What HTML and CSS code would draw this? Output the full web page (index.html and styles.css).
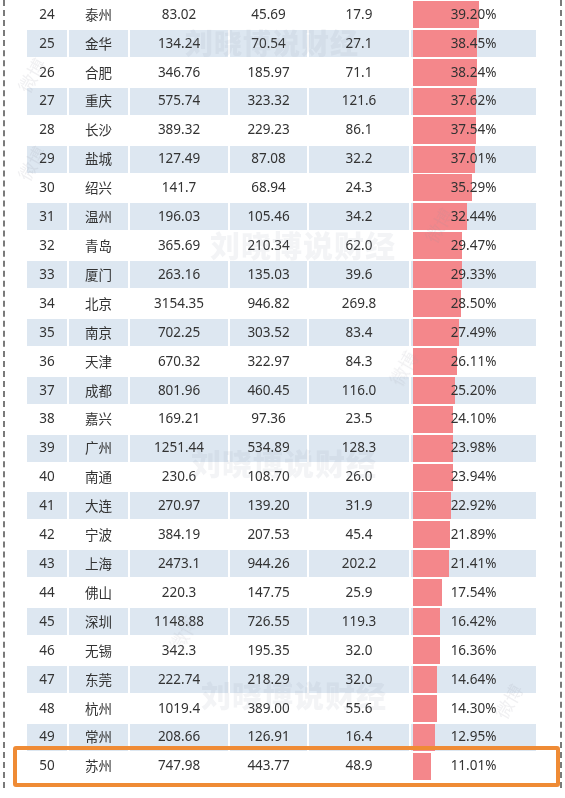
FILE: index.html
```html
<!DOCTYPE html>
<html lang="zh-CN">
<head>
<meta charset="utf-8">
<link rel="stylesheet" href="styles.css">
</head>
<body>
<div class="frame">
  <div class="table" id="table"></div>
  <div class="wm wm1">刘晓博说财经</div>
  <div class="wm wm2">刘晓博说财经</div>
  <div class="wm wm3">刘晓博说财经</div>
  <div class="wm wm4">刘晓博说财经</div>
  <div class="wb wb1">微博</div>
  <div class="wb wb2">微博</div>
  <div class="wb wb3">微博</div>
  <div class="wb wb4">微博</div>
  <div class="wb wb5">微博</div>
  <div class="wb wb6">微博</div>
  <div class="highlight"></div>
</div>
<script>
var rows = [
[24,"泰州","83.02","45.69","17.9","39.20"],
[25,"金华","134.24","70.54","27.1","38.45"],
[26,"合肥","346.76","185.97","71.1","38.24"],
[27,"重庆","575.74","323.32","121.6","37.62"],
[28,"长沙","389.32","229.23","86.1","37.54"],
[29,"盐城","127.49","87.08","32.2","37.01"],
[30,"绍兴","141.7","68.94","24.3","35.29"],
[31,"温州","196.03","105.46","34.2","32.44"],
[32,"青岛","365.69","210.34","62.0","29.47"],
[33,"厦门","263.16","135.03","39.6","29.33"],
[34,"北京","3154.35","946.82","269.8","28.50"],
[35,"南京","702.25","303.52","83.4","27.49"],
[36,"天津","670.32","322.97","84.3","26.11"],
[37,"成都","801.96","460.45","116.0","25.20"],
[38,"嘉兴","169.21","97.36","23.5","24.10"],
[39,"广州","1251.44","534.89","128.3","23.98"],
[40,"南通","230.6","108.70","26.0","23.94"],
[41,"大连","270.97","139.20","31.9","22.92"],
[42,"宁波","384.19","207.53","45.4","21.89"],
[43,"上海","2473.1","944.26","202.2","21.41"],
[44,"佛山","220.3","147.75","25.9","17.54"],
[45,"深圳","1148.88","726.55","119.3","16.42"],
[46,"无锡","342.3","195.35","32.0","16.36"],
[47,"东莞","222.74","218.29","32.0","14.64"],
[48,"杭州","1019.4","389.00","55.6","14.30"],
[49,"常州","208.66","126.91","16.4","12.95"],
[50,"苏州","747.98","443.77","48.9","11.01"]
];
var t = document.getElementById("table");
var html = "";
rows.forEach(function(r){
  var alt = (r[0] % 2 === 1) ? " alt" : "";
  html += '<div class="row' + alt + '">' +
    '<div class="cell">' + r[0] + '</div>' +
    '<div class="cell city">' + r[1] + '</div>' +
    '<div class="cell">' + r[2] + '</div>' +
    '<div class="cell">' + r[3] + '</div>' +
    '<div class="cell">' + r[4] + '</div>' +
    '<div class="cell pct"><span class="bar" style="width:' + (parseFloat(r[5]) * 1.67).toFixed(1) + 'px"></span><span class="pct-text">' + r[5] + '%</span></div>' +
    '</div>';
});
t.innerHTML = html;
</script>
</body>
</html>
```
FILE: styles.css
```css
html, body {
  margin: 0;
  padding: 0;
  background: #ffffff;
}
body {
  width: 565px;
  height: 798px;
  overflow: hidden;
  font-family: "Noto Sans", "Noto Sans CJK SC", sans-serif;
  color: #333333;
  -webkit-font-smoothing: antialiased;
}
.frame {
  position: relative;
  margin-left: 3px;
  width: 559px;
  height: 788px;
  box-sizing: border-box;
  border-left: 2px dashed #7a7a7a;
  border-right: 2px dashed #7a7a7a;
  padding: 1px 0 0 22px;
}
.table {
  display: flex;
  flex-direction: column;
  gap: 1.92px;
  width: 509px;
  will-change: transform;
}
.row {
  display: grid;
  grid-template-columns: 40px 59px 98px 77px 100px 125px;
  column-gap: 2px;
  height: 27px;
}
.cell {
  display: flex;
  align-items: center;
  justify-content: center;
  font-size: 13.5px;
  line-height: 1;
  position: relative;
  color: #333333;
}
.alt .cell {
  background: #dde7f1;
}
.city {
  font-family: "Noto Sans CJK SC", sans-serif;
  font-size: 13.5px;
  color: #333333;
}
.pct {
  justify-content: flex-start;
}
.bar {
  position: absolute;
  left: 2px;
  top: 0;
  bottom: 0;
  background: #f4878b;
}
.pct-text {
  position: relative;
  width: 100%;
  text-align: center;
}
.wm {
  position: absolute;
  font-family: "Noto Sans CJK SC", sans-serif;
  font-weight: 900;
  font-size: 30px;
  color: rgba(120, 130, 150, 0.09);
  letter-spacing: 1px;
  white-space: nowrap;
}
.wm1 { left: 180px; top: 22px; font-size: 28px; }
.wm2 { left: 205px; top: 222px; }
.wm3 { left: 186px; top: 440px; }
.wm4 { left: 196px; top: 672px; }
.wb {
  position: absolute;
  font-family: "Noto Sans CJK SC", sans-serif;
  font-size: 18px;
  color: rgba(150, 150, 160, 0.14);
  transform: rotate(-60deg);
  white-space: nowrap;
}
.wb1 { left: 8px; top: 62px; }
.wb2 { left: 8px; top: 150px; }
.wb3 { left: 415px; top: 212px; }
.wb4 { left: 380px; top: 355px; }
.wb5 { left: 160px; top: 620px; }
.wb6 { left: 485px; top: 688px; }
.highlight {
  position: absolute;
  left: 8px;
  top: 746px;
  width: 547px;
  height: 41px;
  box-sizing: border-box;
  border: 4px solid #ef8b35;
  border-radius: 3px;
}
```
